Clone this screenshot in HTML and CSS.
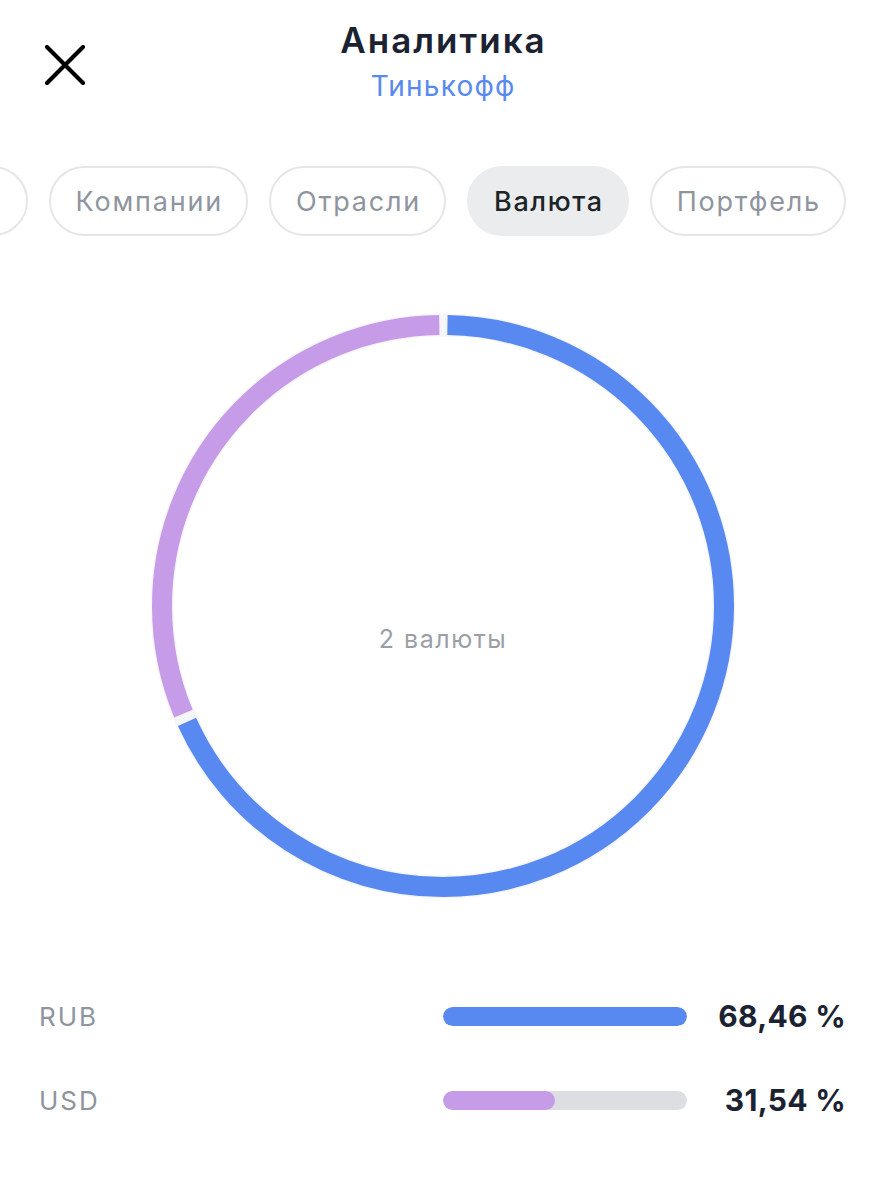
FILE: index.html
```html
<!DOCTYPE html>
<html lang="ru">
<head>
<meta charset="utf-8">
<title>Аналитика</title>
<link rel="stylesheet" href="styles.css">
</head>
<body>
<div class="page">
  <header class="header">
    <button class="close" aria-label="Закрыть">
      <svg width="40" height="40" viewBox="0 0 40 40"><path d="M2 2 L38 38 M38 2 L2 38" stroke="#000" stroke-width="4.2" stroke-linecap="round" fill="none"/></svg>
    </button>
    <div class="titles">
      <div class="title">Аналитика</div>
      <div class="subtitle">Тинькофф</div>
    </div>
    <div></div>
  </header>

  <nav class="tabs">
    <div class="chip chip-hidden" aria-hidden="true"></div>
    <div class="chip">Компании</div>
    <div class="chip">Отрасли</div>
    <div class="chip active">Валюта</div>
    <div class="chip">Портфель</div>
  </nav>

  <div class="chart">
    <svg width="600" height="600" viewBox="0 0 600 600">
      <circle cx="300" cy="300" r="281" fill="none" stroke="#f6f6f9" stroke-width="23"/>
      <circle cx="300" cy="300" r="281" fill="none" stroke="#5889f1" stroke-width="20"
        stroke-dasharray="1199.7 1765.6" stroke-dashoffset="-4.5" transform="rotate(-90 300 300)"/>
      <circle cx="300" cy="300" r="281" fill="none" stroke="#c69be8" stroke-width="20"
        stroke-dasharray="547.9 1765.6" stroke-dashoffset="-1213.2" transform="rotate(-90 300 300)"/>
      <text x="300" y="342" text-anchor="middle" class="center-label">2 валюты</text>
    </svg>
  </div>

  <div class="legend">
    <div class="row">
      <div class="code">RUB</div>
      <div class="bar"><div class="fill blue" style="width:100%"></div></div>
      <div class="pct">68,46 %</div>
    </div>
    <div class="row">
      <div class="code">USD</div>
      <div class="bar"><div class="fill purple" style="width:46.07%"></div></div>
      <div class="pct">31,54 %</div>
    </div>
  </div>
</div>
</body>
</html>
```

FILE: styles.css
```css
* { box-sizing: border-box; }
html, body { margin: 0; padding: 0; background: #fff; }
body {
  font-family: Inter, "Noto Sans", "Liberation Sans", sans-serif;
  color: #1b2232;
}
.page { width: 885px; }

.header {
  display: grid;
  grid-template-columns: 1fr auto 1fr;
  padding-top: 18px;
}
.close {
  justify-self: start;
  margin: 27px 0 0 45px;
  padding: 0;
  border: 0;
  background: none;
  width: 40px;
  height: 40px;
  display: block;
}
.close svg { display: block; }
.titles { text-align: center; }
.title {
  font-size: 35px;
  line-height: 44px;
  font-weight: 600;
  color: #1b2232;
  letter-spacing: 2px;
  margin-right: -2px;
}
.subtitle {
  margin-top: 6px;
  font-size: 28px;
  line-height: 36px;
  color: #5889f1;
  letter-spacing: 1.2px;
  margin-right: -1.2px;
}

.tabs {
  margin-top: 62px;
  display: flex;
  justify-content: flex-end;
  gap: 21px;
  padding-right: 39px;
  overflow: hidden;
}
.chip {
  flex: none;
  height: 70px;
  padding: 0 23px 0 25px;
  border: 2px solid #e4e6e9;
  border-radius: 35px;
  display: flex;
  align-items: center;
  font-size: 27px;
  color: #8f959e;
  white-space: nowrap;
  letter-spacing: 1.8px;
}
.chip-hidden { width: 160px; }
.chip.active {
  background: #ebecee;
  border-color: #ebecee;
  color: #1c2526;
  font-weight: 500;
  letter-spacing: 1.6px;
}

.chart {
  display: flex;
  justify-content: center;
  margin-top: 70px;
}
.chart svg { display: block; }
.center-label {
  font-family: Inter, "Noto Sans", "Liberation Sans", sans-serif;
  font-size: 25px;
  letter-spacing: 1.5px;
  fill: #9a9fa7;
}

.legend {
  margin-top: 90px;
  display: flex;
  flex-direction: column;
  gap: 44px;
}
.row {
  display: flex;
  align-items: center;
  padding: 0 39px;
  height: 40px;
}
.code {
  flex: 1;
  font-size: 26px;
  color: #8f959e;
  letter-spacing: 2px;
}
.bar {
  width: 244px;
  height: 19px;
  border-radius: 10px;
  background: #dcdee1;
  overflow: hidden;
}
.fill { height: 100%; border-radius: 10px; }
.fill.blue { background: #5889f1; }
.fill.purple { background: #c69be8; }
.pct {
  width: 159px;
  text-align: right;
  font-size: 30px;
  font-weight: 700;
  color: #1b2232;
  letter-spacing: 0.3px;
}
```
